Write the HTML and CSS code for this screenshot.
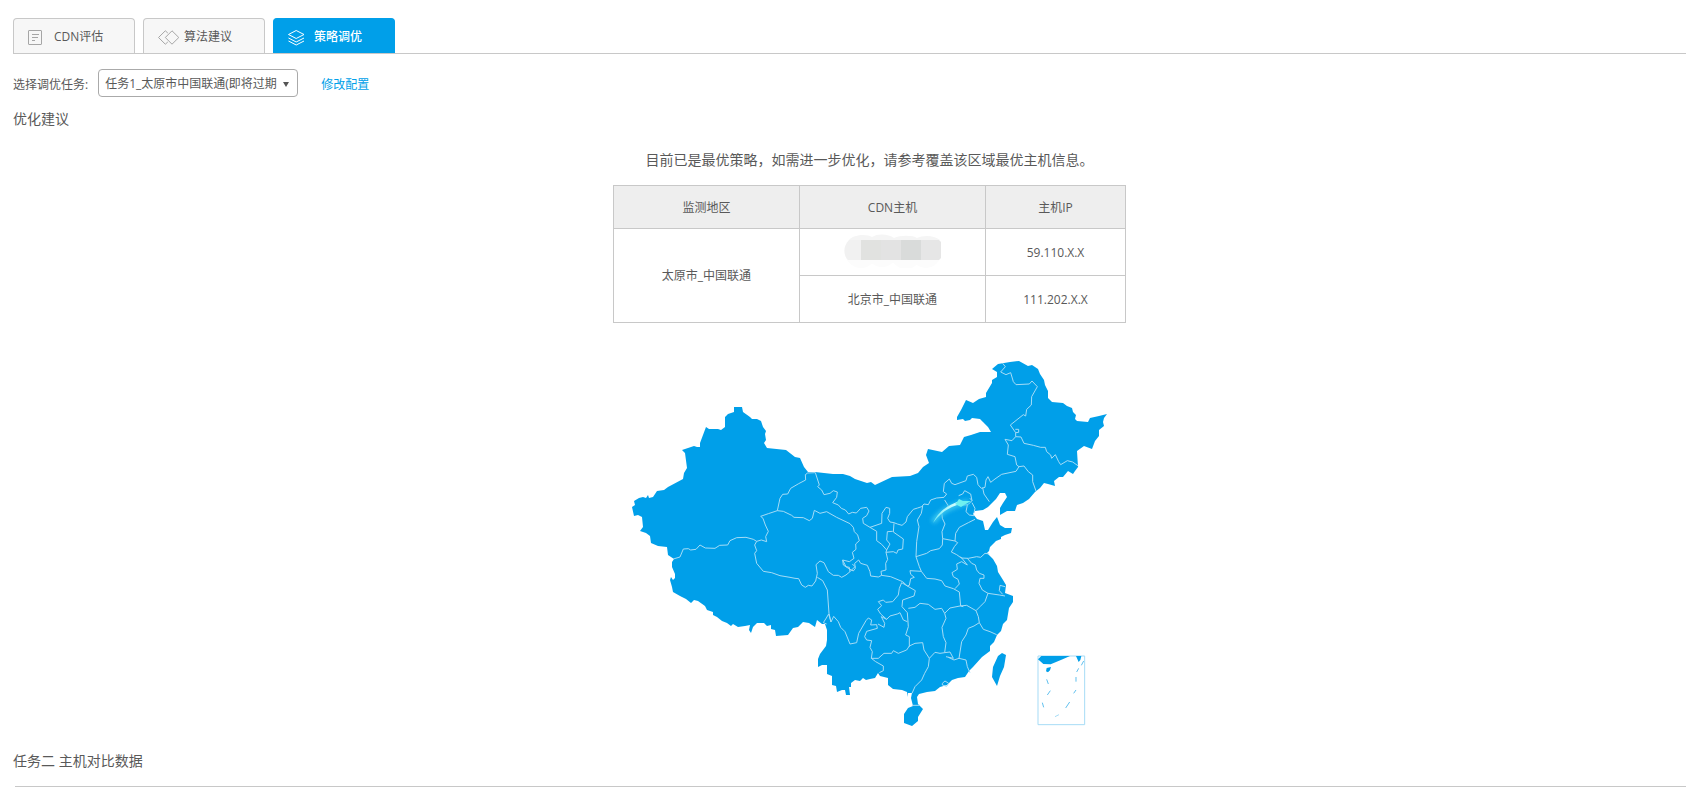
FILE: index.html
```html
<!DOCTYPE html>
<html lang="zh-CN">
<head>
<meta charset="utf-8">
<title>策略调优</title>
<link rel="stylesheet" href="styles.css">
</head>
<body>
<nav class="tabs">
  <button class="tab" type="button">
    <svg class="tab-icon" viewBox="0 0 22 18" aria-hidden="true"><rect x="0.5" y="2.5" width="13" height="14" rx="0.5"/><path d="M4 6.500h7M4 9.500h6M4 12.500h3"/></svg>
    CDN评估
  </button>
  <button class="tab" type="button">
    <svg class="tab-icon" viewBox="0 0 22 18" aria-hidden="true"><path d="M9.800 5L7.300 2.800L0.500 9.500L7.300 16.200L9.800 14M14 2.800L20.800 9.500L14 16.200L7.300 9.500z"/></svg>
    算法建议
  </button>
  <button class="tab tab-active" type="button">
    <svg class="tab-icon" viewBox="0 0 22 18" aria-hidden="true"><path d="M8.200 2.500L16 6.500L8.200 10.500L0.500 6.500zM0.500 10L8.200 14L16 10M0.500 13L8.200 17L16 13"/></svg>
    策略调优
  </button>
</nav>
<main class="page">
  <form class="filter">
    <label class="filter-text" for="task">选择调优任务:</label>
    <span class="select-wrap">
      <select id="task" class="select"><option>任务1_太原市中国联通(即将过期</option></select>
      <span class="select-arrow"></span>
    </span>
    <a class="link filter-text" href="#">修改配置</a>
  </form>
  <h2 class="heading">优化建议</h2>
  <section class="advice">
    <p class="message">目前已是最优策略，如需进一步优化，请参考覆盖该区域最优主机信息。</p>
    <table class="hosts">
      <thead>
        <tr><th class="col-wide">监测地区</th><th class="col-wide">CDN主机</th><th class="col-ip">主机IP</th></tr>
      </thead>
      <tbody>
        <tr>
          <td rowspan="2">太原市_中国联通</td>
          <td class="masked">
            <svg class="mosaic" viewBox="0 0 98 34" aria-hidden="true">
              <g fill="#fcfcfc"><circle cx="17" cy="18" r="16"/><circle cx="38" cy="17" r="16"/><circle cx="62" cy="19" r="16"/><circle cx="82" cy="19" r="15"/></g>
              <path fill="#f5f5f5" d="M5 6C10 0 24 0 28 3C34-1 45 0 50 4C56 1 69 1 73 4C79 1 90 1 96 6z"/>
              <path fill="#f1f1f1" d="M17 6H5C-1 12-1 21 4 26H17z"/>
              <path fill="#e1e2e0" d="M17 6h20v20H17z"/><path fill="#e3e3e3" d="M37 6h20v20H37z"/><path fill="#d9dbda" d="M57 6h20v20H57z"/>
              <path fill="#e6e6e6" d="M77 6h18l2 2v16l-2 2H77z"/>
            </svg>
          </td>
          <td>59.110.X.X</td>
        </tr>
        <tr><td>北京市_中国联通</td><td>111.202.X.X</td></tr>
      </tbody>
    </table>
    <svg class="map" viewBox="612 350 516 390" role="img" aria-label="中国地图">
      <defs>
        <linearGradient id="trail" x1="0" y1="1" x2="1" y2="0"><stop offset="0" stop-color="#6fe9f5"/><stop offset="1" stop-color="#d8ffff"/></linearGradient>
        <filter id="glow" x="-50%" y="-50%" width="200%" height="200%"><feGaussianBlur stdDeviation="2"/></filter>
      </defs>
      <g class="land">
        <path d="M632 507L635 505L634 501L639 498L643 497L646 498L648 495L649 498L653 497L657 491L664 490L668 487L683 479L684 473L687 468L685 453L682 450L694 446L697 447L700 447L700 443L706 427L709 429L718 429L721 430L725 427L725 417L728 414L734 412L734 407L742 407L743 412L750 417L752 419L757 419L761 421L763 427L766 431L765 434L766 440L764 443L767 448L786 450L795 457L800 458L804 467L808 472L815 472L833 474L843 474L850 476L855 479L867 483L871 482L875 485L892 477L910 476L918 473L923 467L929 463L926 455L928 449L942 452L949 446L960 445L964 437L971 435L980 432L991 432L988 427L983 422L980 419L972 418L970 420L965 421L963 419L957 420L957 417L961 410L966 400L973 403L979 399L986 397L986 393L992 383L992 380L997 377L997 372L992 369L998 364L1010 362L1019 361L1028 366L1032 365L1038 369L1040 374L1044 380L1045 385L1048 391L1048 398L1052 402L1063 403L1067 406L1072 408L1073 412L1076 415L1075 419L1077 421L1088 422L1090 418L1099 416L1107 414L1104 418L1103 422L1104 426L1099 430L1099 436L1095 441L1092 449L1084 446L1077 451L1078 467L1075 471L1073 474L1068 471L1063 477L1059 477L1054 481L1055 486L1048 484L1044 483L1040 488L1035 492L1029 499L1023 503L1017 505L1015 511L1007 511L1000 515L1000 508L1003 503L1007 497L1005 493L1000 493L996 499L988 507L983 510L975 511L973 514L977 519L983 521L985 530L988 530L993 522L997 517L1000 525L1005 528L1012 528L1011 533L1005 535L1001 537L1001 539L996 541L990 547L989 551L987 553L993 559L997 566L998 572L1003 580L1006 585L1005 593L1013 596L1013 602L1009 608L1008 614L1007 620L1003 624L1001 631L997 635L994 642L990 646L990 651L982 657L973 667L969 671L965 677L958 678L952 680L947 685L940 687L935 691L927 692L919 694L917 697L918 704L923 709L918 717L918 721L912 726L904 723L904 714L908 708L913 706L911 698L912 693L908 693L908 697L907 692L902 690L893 689L888 685L888 678L880 676L878 673L875 678L870 679L866 680L863 678L860 681L855 680L851 683L851 687L849 687L850 695L846 695L845 690L842 690L837 692L836 686L832 685L832 676L827 674L827 665L822 665L818 667L818 659L820 654L826 646L827 640L827 630L825 624L822 624L817 620L815 627L809 623L803 622L798 627L793 628L788 635L776 636L775 630L771 629L771 625L767 626L764 623L757 623L753 627L751 633L749 630L750 625L745 626L738 627L733 624L731 626L727 623L722 621L717 617L713 615L713 612L707 610L705 606L698 601L694 600L691 603L686 599L680 596L673 592L672 587L670 580L671 577L673 580L675 578L675 574L672 567L672 562L674 559L668 555L667 547L658 546L651 543L650 536L646 533L640 531L643 527L642 517L638 515L634 516z"/>
        <path d="M1002 653L1006 655L1004 667L1000 676L997 686L992 677L993 667L998 656z"/>
      </g>
      <g class="borders" transform="translate(620 340) scale(0.333333)">
        <path d="M160 657L180 651L190 627L205 626L212 630L228 628L240 615L256 624L285 625L299 616L323 615L330 602L350 593L378 592L400 598L410 604L424 600L440 605L437 590L445 574L436 555L429 535L422 529L445 521L472 512L480 475L488 463L503 462L512 445L536 431L557 420L556 404L563 399L586 398L598 435L593 440L605 450L612 464L630 460L640 452L652 456L650 472L638 488L655 495L664 505L676 510L686 522L697 517L709 519L722 505L740 502L747 513L740 527L728 535L730 550L750 562L785 550L786 520L798 502L809 505L809 520L803 535L810 546L822 548L832 552L846 556L858 546L862 530L880 508L893 504L905 500L912 492L925 494L932 480L950 474L972 472L980 462L970 455L973 430L988 417L995 430L1005 434L1038 422L1042 408L1060 403L1070 412L1074 434L1084 445L1095 442L1098 420L1104 410L1112 427L1125 417L1145 403L1188 394L1197 380L1212 378L1225 395L1238 405L1238 425L1248 453"/>
        <path d="M472 512L490 514L515 526L522 532L550 533L568 542L577 535L583 511L600 520L620 515L650 532L690 551L700 562L703 575L713 585L718 602L707 612L708 628L697 637L702 655L688 665L668 660L678 680L688 682L690 695L705 680L697 672M668 660L670 675L690 688M690 695L678 705L665 712L655 706L640 706L625 695L612 668L600 663L588 674L592 700L587 723L576 738L565 736L556 742L545 735L536 716L525 715L510 712L480 707L455 698L430 694L410 670L404 640L410 632L404 615L410 604"/>
        <path d="M592 712L608 722L622 750L627 820L633 846L626 822L619 834L610 848L620 852M633 846L641 829L655 845L662 862L675 875L690 912L710 908L716 880L738 842L745 834L755 840L752 855L770 854L772 865L740 874L734 890L740 900L755 902L750 922L757 935L754 955L767 965L790 978L790 992L778 998"/>
        <path d="M690 688L700 693L706 685L704 670L716 660L722 670L742 676L750 695L752 708L775 711L785 706L812 710L848 725L862 738L845 728L838 745L835 765L818 785L797 787L790 780L775 785L785 797L773 808L782 822L800 838L810 828L832 822L840 818L850 840L862 845M785 706L783 694L798 690L797 670L803 658L798 637L820 635L830 640L834 630L848 627L850 597L820 576L822 550M750 562L770 574L770 602L785 613L800 630L810 612L800 600L802 575L818 574M798 637L800 630M800 838L784 830L794 850L792 862L774 852"/>
        <path d="M908 498L904 520L892 540L897 560L890 605L888 650L898 680L904 694L870 692L872 703L883 712L872 716L868 736L862 738L886 752L882 768L848 780L846 800L862 818L865 860L857 885L868 890L868 920M888 650L920 640L932 632L958 626L967 615L968 596L1005 603L1013 608L1003 620L994 636L1010 644L1024 654L1045 655L1070 650L1082 652L1095 640L1108 642M904 694L920 715L945 717L965 722L975 738L1000 746L1018 756L1022 798L1030 800M974 480L985 498L965 515L967 535L975 552L966 575L968 596M1065 538L1045 548L1018 562L1007 580L1005 603M1022 650L1042 675L1025 665L1010 672L1012 688L996 698L1000 710L1014 718L1018 732L1005 746M1042 655L1055 670L1066 675L1070 690L1078 700L1092 705L1092 715L1080 715L1077 730L1087 750L1104 760L1138 765L1155 768M1155 740L1140 736L1138 752L1148 763M1104 760L1095 785L1080 800L1068 812L1040 796L1020 798L990 804L974 820L965 805L945 808L925 793L900 790L885 802L865 805"/>
        <path d="M974 820L978 835L966 862L970 890L978 908L974 938L990 936L1000 955L978 950M1068 812L1075 830L1078 848L1062 858L1045 865L1038 885L1025 905L1017 955L1002 960L985 952M1017 955L1038 960L1042 980L1050 998M1078 848L1090 868L1110 875L1130 884"/>
        <path d="M754 955L775 955L792 940L815 940L820 932L835 940L860 930L868 918L885 910L908 908L912 930L928 955L945 937L960 940L974 938M928 955L925 980L914 1000L905 1020L885 1040L876 1060M967 1030L975 1023L986 1030L980 1039L967 1035zM876 1096H900"/>
        <path d="M1148 70L1156 80L1142 96L1158 104L1172 98L1180 125L1188 134L1228 132L1236 123L1252 140L1235 170L1234 195L1220 208L1217 228L1210 224L1171 255L1187 278L1196 277L1196 268L1186 268M1187 278L1187 290L1203 291L1212 310L1240 316L1262 322L1276 322L1280 335L1292 345L1295 355L1306 344L1316 365L1322 374L1342 362L1358 366L1375 378M1187 290L1176 302L1155 298L1165 315L1162 343L1185 350L1190 375L1197 380"/>
        <path d="M1016 467L1028 462L1034 452L1052 462L1056 482L1044 494L1020 496M1056 482L1050 475M1042 495L1038 515L1048 525L1062 527M1056 488L1065 505L1062 520M1088 443L1092 462L1108 485"/>
      </g>
      <path class="trail-glow" filter="url(#glow)" d="M933 522Q943 507 968 502"/>
      <path fill="url(#trail)" d="M933 523Q940 508 957 502L957 505Q942 510 933 523z"/>
      <path fill="#6ff0f0" d="M957 502L959 499L963 501L971 501L964 505L961 507L955 504z"/>
      <g transform="translate(1020 640) scale(0.333333)">
        <path class="inset" d="M54 48H194V254H54z"/>
        <g class="land"><path d="M54 58L64 48H150L128 58L92 73L70 72zM168 48H184L181 60L176 66zM80 84L93 81L90 91L84 97L78 94z"/></g>
        <path class="dashes" d="M80 118L85 132M91 152L82 165M67 188L71 202M149 186L137 204M168 150L161 160M168 111V125M176 85L170 96M191 63L184 76"/>
        <path class="dashes-light" d="M105 230L117 224"/>
      </g>
    </svg>
  </section>
  <h2 class="heading">任务二 主机对比数据</h2>
  <hr class="divider">
</main>
</body>
</html>
```

FILE: styles.css
```css
* { box-sizing: border-box; }
body {
  margin: 0;
  padding: 18px 0 0 13px;
  background: #fff;
  color: #595959;
  font-family: "Open Sans", "Noto Sans CJK SC", sans-serif;
  font-size: 12px;
  line-height: 18px;
}
.tabs {
  display: flex;
  gap: 8px;
  border-bottom: 1px solid #c8c8c8;
}
.tab {
  display: flex;
  align-items: center;
  gap: 4px;
  width: 122px;
  height: 35px;
  padding: 2px 0 0 14px;
  border: 1px solid #c8c8c8;
  border-bottom: 0;
  border-radius: 4px 4px 0 0;
  background: #f7f7f7;
  color: #595959;
  font: inherit;
}
.tab-active {
  border-color: #009fe9;
  background: #009fe9;
  color: #fff;
  font-weight: 500;
}
.tab-icon {
  width: 22px;
  height: 18px;
  fill: none;
  stroke: #a6a6a6;
}
.tab-active .tab-icon { stroke: #fff; }
.filter {
  display: flex;
  align-items: center;
  margin-top: 15px;
}
.filter-text { padding-top: 3px; }
.select-wrap {
  display: grid;
  align-items: center;
  margin: 0 23px 0 10px;
}
.select {
  grid-area: 1 / 1;
  appearance: none;
  width: 200px;
  height: 28px;
  padding: 2px 16px 0 6px;
  border: 1px solid #aaa;
  border-radius: 4px;
  background: #fff;
  color: #595959;
  font: inherit;
}
.select-arrow {
  grid-area: 1 / 1;
  justify-self: end;
  margin: 2px 9px 0 0;
  border: 3px solid transparent;
  border-top: 5px solid #555;
  border-bottom: 0;
  pointer-events: none;
}
.link { color: #009fe9; text-decoration: none; }
.heading {
  margin: 12px 0 0;
  font-size: 14px;
  font-weight: 400;
  line-height: 20px;
}
.advice {
  display: flex;
  flex-direction: column;
  align-items: center;
  padding: 21px 0 0 40px;
}
.message {
  margin: 0 0 15px;
  font-size: 14px;
  line-height: 20px;
}
.hosts {
  border-collapse: collapse;
  text-align: center;
}
.hosts th, .hosts td {
  height: 47px;
  padding: 1px 0 0;
  border: 1px solid #c8c8c8;
}
.hosts th {
  height: 43px;
  background: #eee;
  font-weight: 400;
}
.hosts .col-wide { width: 186px; }
.hosts .col-ip { width: 140px; }
.hosts .masked { vertical-align: top; }
.mosaic {
  display: block;
  width: 98px;
  height: 34px;
  margin: 4px auto 0;
}
.map {
  width: 516px;
  max-width: 100%;
  margin: 27px 0 0;
}
.land { fill: #009fe9; }
.borders {
  fill: none;
  stroke: #a6dcf6;
  stroke-width: 3;
  stroke-linejoin: round;
}
.trail-glow { fill: none; stroke: #3cc8f0; stroke-width: 5; }
.inset { fill: #fff; stroke: #a6dcf6; stroke-width: 3; }
.dashes { fill: none; stroke: #5fc0ee; stroke-width: 3; }
.dashes-light { fill: none; stroke: #a6dcf6; stroke-width: 3; }
.heading:last-of-type { margin-top: 11px; }
.divider {
  margin: 15px 0 0 2px;
  border: 0;
  border-top: 1px solid #c8c8c8;
}
```
